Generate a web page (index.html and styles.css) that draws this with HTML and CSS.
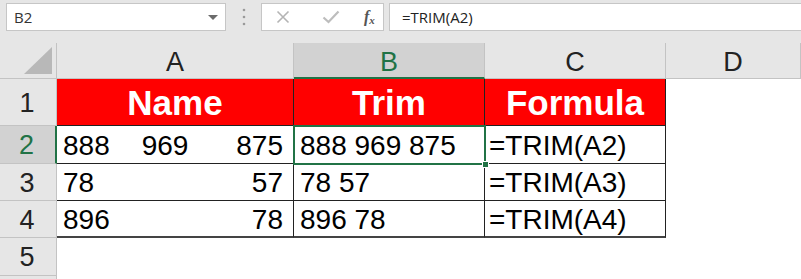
FILE: index.html
```html
<!DOCTYPE html>
<html>
<head>
<meta charset="utf-8">
<link rel="stylesheet" href="styles.css">
</head>
<body>
<div class="toolbar">
  <div class="namebox">
    <span class="nb-text">B2</span>
    <svg class="nb-arrow" width="10" height="6" viewBox="0 0 10 6"><polygon points="0,0 10,0 5,5" fill="#6b6b6b"/></svg>
  </div>
  <div class="grip">
    <svg width="4" height="18" viewBox="0 0 4 18"><circle cx="2" cy="2" r="1.3" fill="#9a9a9a"/><circle cx="2" cy="9" r="1.3" fill="#9a9a9a"/><circle cx="2" cy="16" r="1.3" fill="#9a9a9a"/></svg>
  </div>
  <div class="fbtns">
    <svg class="fb-x" width="14" height="14" viewBox="0 0 14 14"><path d="M1.5 1.5 L12.5 12.5 M12.5 1.5 L1.5 12.5" stroke="#b4b4b4" stroke-width="1.6" fill="none"/></svg>
    <svg class="fb-check" width="18" height="14" viewBox="0 0 18 14"><path d="M1.5 7.5 L6.5 12 L16.5 1.5" stroke="#bdbdbd" stroke-width="2.2" fill="none"/></svg>
    <span class="fb-fx">f<sub>x</sub></span>
  </div>
  <div class="finput">=TRIM(A2)</div>
</div>

<div class="sheet">
  <div class="hd corner"><svg width="29" height="28" viewBox="0 0 29 28"><polygon points="0,27 28,0 28,27" fill="#b8b8b8"/></svg></div>
  <div class="hd col">A</div>
  <div class="hd col sel-col">B</div>
  <div class="hd col">C</div>
  <div class="hd col">D</div>

  <div class="hd row">1</div>
  <div class="c red">Name</div>
  <div class="c red">Trim</div>
  <div class="c red">Formula</div>
  <div class="c blank"></div>

  <div class="hd row sel-row">2</div>
  <div class="c split"><span>888</span><span class="mid">969</span><span>875</span></div>
  <div class="c txt selected">888 969 875<span class="handle"></span></div>
  <div class="c txt f">=TRIM(A2)</div>
  <div class="c blank"></div>

  <div class="hd row">3</div>
  <div class="c split"><span>78</span><span>57</span></div>
  <div class="c txt">78 57</div>
  <div class="c txt f">=TRIM(A3)</div>
  <div class="c blank"></div>

  <div class="hd row">4</div>
  <div class="c split last"><span>896</span><span>78</span></div>
  <div class="c txt last">896 78</div>
  <div class="c txt f last">=TRIM(A4)</div>
  <div class="c blank"></div>

  <div class="hd row">5</div>
  <div class="c blank"></div>
  <div class="c blank"></div>
  <div class="c blank"></div>
  <div class="c blank"></div>

  <div class="hd row stub"></div>
  <div class="c blank"></div>
  <div class="c blank"></div>
  <div class="c blank"></div>
  <div class="c blank"></div>
</div>
</body>
</html>
```

FILE: styles.css
```css
* { box-sizing: border-box; }
html, body { margin: 0; padding: 0; }
body {
  width: 801px;
  height: 279px;
  overflow: hidden;
  background: #e6e6e6;
  font-family: "Liberation Sans", Arial, sans-serif;
}

.toolbar {
  height: 43px;
  display: flex;
  align-items: flex-start;
  padding: 3px 0 0 6px;
  font-family: "Open Sans", "Noto Sans", sans-serif;
}
.namebox {
  width: 220px;
  height: 28px;
  background: #fff;
  border: 1px solid #c6c6c6;
  display: flex;
  align-items: center;
  justify-content: space-between;
  padding: 0 7px 0 7px;
}
.nb-text { font-size: 15px; color: #333; }
.nb-arrow { margin-top: 1px; }
.grip {
  width: 35px;
  height: 28px;
  display: flex;
  align-items: center;
  justify-content: center;
}
.fbtns {
  width: 123px;
  height: 28px;
  background: #fff;
  border: 1px solid #c6c6c6;
  display: flex;
  align-items: center;
  padding-left: 14px;
  margin-right: 5px;
}
.fb-x { margin-right: 32px; }
.fb-check { margin-right: 24px; }
.fb-fx {
  font-family: "Liberation Serif", "DejaVu Serif", serif;
  font-style: italic;
  font-size: 16px;
  color: #555;
  font-weight: bold;
}
.fb-fx sub { font-size: 11px; vertical-align: -2px; }
.finput {
  flex: 1;
  height: 28px;
  margin-right: -2px;
  background: #fff;
  border: 1px solid #c6c6c6;
  font-size: 15px;
  color: #222;
  display: flex;
  align-items: center;
  padding-left: 12px;
}

.sheet {
  display: grid;
  grid-template-columns: 57px 237px 191px 181px 135px;
  grid-template-rows: 36px 47px 38px 37px 37px 38px 3px;
  background: #fff;
}
.hd {
  background: #e6e6e6;
  color: #222;
  font-size: 27px;
  display: flex;
  align-items: center;
  justify-content: center;
  border-right: 1px solid #c3c3c3;
  border-bottom: 1px solid #c3c3c3;
}
.col { padding-top: 4px; }
.row { padding-top: 2px; padding-right: 2px; }
.stub { border-bottom: none; }
.corner {
  align-items: flex-end;
  justify-content: flex-end;
  padding: 0 3px 3px 0;
  border-right: 1px solid #c3c3c3;
}
.sel-col {
  background: #d2d2d2;
  color: #217346;
  border-bottom: 2px solid #217346;
}
.sel-row {
  background: #d2d2d2;
  color: #217346;
  border-right: 2px solid #217346;
}

.c {
  font-size: 28px;
  color: #000;
  display: flex;
  align-items: center;
  border-right: 1px solid #222;
  border-bottom: 1px solid #222;
  padding-top: 2px;
  white-space: pre;
}
.c.last { border-bottom: 2px solid #444; }
.blank { border: none; }
.red {
  background: #ff0000;
  color: #fff;
  font-weight: bold;
  font-size: 35px;
  justify-content: center;
  padding-top: 1px;
}
.split {
  justify-content: space-between;
  padding: 2px 10px 0 6px;
}
.split .mid { margin-right: 16px; }
.txt { padding-left: 6px; }
.txt.f { padding-left: 4px; }
.selected {
  position: relative;
  outline: 2px solid #217346;
  outline-offset: -1px;
  z-index: 1;
}
.handle {
  position: absolute;
  right: -5px;
  bottom: -5px;
  width: 7px;
  height: 7px;
  background: #217346;
  border: 1px solid #fff;
}
```
